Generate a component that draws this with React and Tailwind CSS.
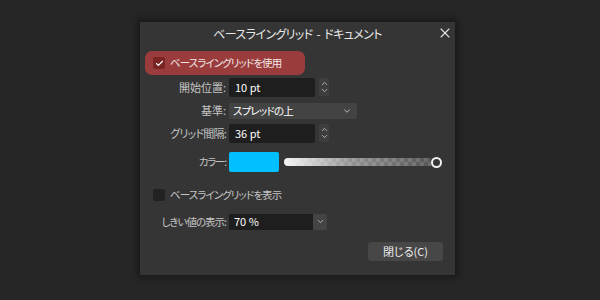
import { X, Check, ChevronDown, ChevronUp } from "lucide-react";

function Spinner() {
  return (
    <div className="ml-[4px] flex h-[18px] w-[10px] flex-col items-center justify-center rounded-[2px] bg-[#3e3e3e] text-[#d0d0d0]">
      <ChevronUp size={9} strokeWidth={2} className="-mb-[1px]" />
      <ChevronDown size={9} strokeWidth={2} className="-mt-[1px]" />
    </div>
  );
}

function Row({ label, labelClass = "text-[11px]", className, children }) {
  return (
    <div className={`flex items-center ${className}`}>
      <div className={`w-[89px] pr-[3px] text-right text-[#c4c4c4] ${labelClass}`}>{label}</div>
      {children}
    </div>
  );
}

export default function App() {
  return (
    <div className="flex h-[300px] w-[600px] bg-[#262626] pl-[140px] pt-[22px] font-['Noto_Sans_CJK_JP',sans-serif] [font-feature-settings:'palt']">
      <div className="flex h-[253px] w-[315px] flex-col bg-[#353535] shadow-[0_0_6px_3px_rgba(0,0,0,0.35)]">
        {/* title bar */}
        <div className="relative flex h-[22px] items-center justify-center pt-[1px] text-[12px] tracking-[-0.6px] text-[#e6e6e6]">
          ベースライングリッド<span className="mx-[4px]">-</span>ドキュメント
          <X size={16} strokeWidth={1.7} className="absolute right-[2px] top-[3px] text-[#e0e0e0]" />
        </div>

        {/* use baseline grid */}
        <div className="ml-[5px] mt-[7px] flex h-[24px] w-[160px] items-center rounded-[7px] bg-[#9b3c3c] pl-[8px]">
          <div className="flex h-[12px] w-[12px] items-center justify-center rounded-[2px] bg-[#7a2424]">
            <Check size={9} strokeWidth={3} className="text-white" />
          </div>
          <span className="ml-[5px] text-[10.5px] tracking-[-0.9px] text-[#f0e6e6]">ベースライングリッドを使用</span>
        </div>

        <Row label="開始位置:" className="mt-[2px] h-[20px]">
          <div className="flex h-[19px] w-[86px] items-center rounded-[2px] bg-[#1e1e1e] pl-[6px] text-[11px] text-white">10 pt</div>
          <Spinner />
        </Row>

        <Row label="基準:" className="mt-[5px] h-[17px]">
          <div className="flex h-[16px] w-[128px] items-center justify-between rounded-[2px] bg-[#434343] pl-[4px] pr-[5px] text-[10.5px] tracking-[-0.8px] text-white">
            スプレッドの上
            <ChevronDown size={10} strokeWidth={2} className="text-[#d0d0d0]" />
          </div>
        </Row>

        <Row label="グリッド間隔:" labelClass="text-[11px] tracking-[-0.8px]" className="mt-[4px] h-[20px]">
          <div className="flex h-[19px] w-[86px] items-center rounded-[2px] bg-[#1e1e1e] pl-[6px] text-[11px] text-white">36 pt</div>
          <Spinner />
        </Row>

        <Row label="カラー:" labelClass="text-[10.5px] tracking-[-1.2px]" className="mt-[9px] h-[20px]">
          <div className="h-[20px] w-[50px] rounded-[2px] bg-[#00c0ff]" />
          <div className="ml-[5px] h-[8px] w-[147px] rounded-l-full [background:linear-gradient(to_right,rgba(255,255,255,0.95),rgba(255,255,255,0.4)_45%,rgba(255,255,255,0.05)),conic-gradient(#626262_25%,#4c4c4c_0_50%,#626262_0_75%,#4c4c4c_0)_0_0/8px_8px]" />
          <div className="h-[11px] w-[11px] rounded-full border-2 border-[#f0f0f0]" />
        </Row>

        <div className="ml-[13px] mt-[17px] flex h-[12px] items-center">
          <div className="h-[12px] w-[12px] rounded-[2px] bg-[#222222]" />
          <span className="ml-[5px] text-[10.5px] tracking-[-0.9px] text-[#c4c4c4]">ベースライングリッドを表示</span>
        </div>

        <Row label="しきい値の表示:" labelClass="text-[10.5px] tracking-[-1px]" className="mt-[12px] h-[17px]">
          <div className="flex h-[16px] w-[84px] items-center bg-[#1e1e1e] pl-[5px] text-[11px] text-white">70 %</div>
          <div className="flex h-[16px] w-[14px] items-center justify-center rounded-r-[2px] bg-[#444444]">
            <ChevronDown size={9} strokeWidth={2} className="text-[#d0d0d0]" />
          </div>
        </Row>

        <div className="mt-[12px] flex justify-end pr-[12px]">
          <div className="flex h-[19px] w-[75px] items-center justify-center rounded-[3px] bg-[#474747] text-[11px] text-[#eeeeee]">閉じる(C)</div>
        </div>
      </div>
    </div>
  );
}
